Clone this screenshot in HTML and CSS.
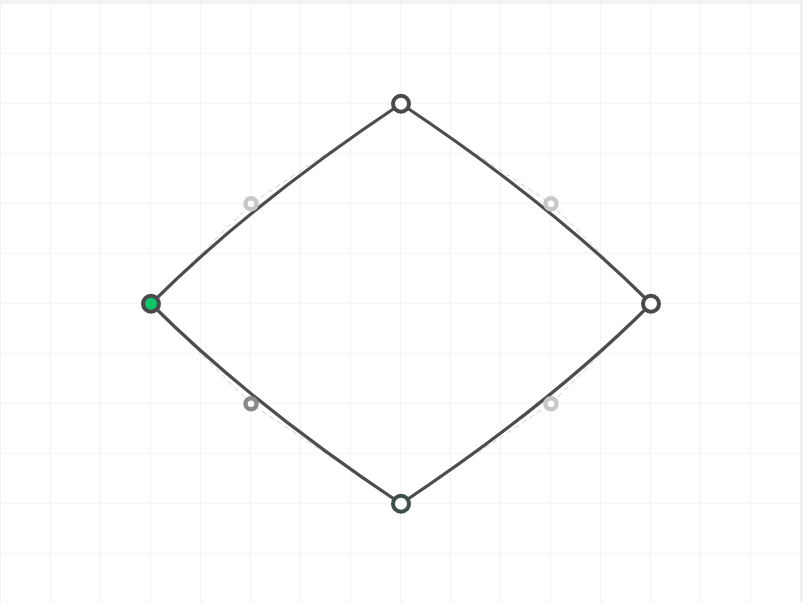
FILE: index.html
```html
<!DOCTYPE html>
<html lang="en">
<head>
  <meta charset="UTF-8">
  <title>Curve editor</title>
  <link rel="stylesheet" href="styles.css">
</head>
<body>
  <div class="board">
    <svg class="canvas" width="800" height="600" viewBox="0 -0.75 800 600">
      <defs>
        <pattern id="grid" width="50" height="50" patternUnits="userSpaceOnUse">
          <path d="M50 0 V50 M0 50 H50" class="grid-line"/>
        </pattern>
      </defs>
      <rect y="-0.75" width="800" height="601" fill="url(#grid)"/>

      <!-- handles -->
      <g class="handle-lines">
        <path d="M150 300 L250 200 L400 100"/>
        <path d="M400 100 L550 200 L650 300"/>
        <path d="M650 300 L550 400 L400 500"/>
        <path d="M400 500 L250 400 L150 300"/>
      </g>

      <!-- shape -->
      <g class="edges">
        <path d="M150 300 Q250 200 400 100"/>
        <path d="M400 100 Q550 200 650 300"/>
        <path d="M650 300 Q550 400 400 500"/>
        <path d="M400 500 Q250 400 150 300"/>
      </g>

      <g class="controls">
        <circle cx="250" cy="200" r="5.5"/>
        <circle cx="550" cy="200" r="5.5"/>
        <circle cx="550" cy="400" r="5.5"/>
        <circle cx="250" cy="400" r="5.5" class="hover"/>
      </g>

      <g class="anchors">
        <circle cx="400" cy="100" r="8"/>
        <circle cx="650" cy="300" r="8"/>
        <circle cx="400" cy="500" r="8" class="focus"/>
        <circle cx="150" cy="300" r="8" class="active"/>
      </g>
    </svg>
  </div>
</body>
</html>
```

FILE: styles.css
```css
html, body {
  margin: 0;
  height: 100%;
  overflow: hidden;
}

body {
  background: #f2f2f2;
  padding: 3px 2px 0 1px;
  box-sizing: border-box;
}

.board {
  width: 800px;
  height: 600px;
  background: white;
  border-radius: 5px 5px 0 0;
  overflow: hidden;
}

.canvas { display: block; }

.grid-line {
  fill: none;
  stroke: #f0f0f0;
  stroke-width: 1.6;
}

.handle-lines path {
  fill: none;
  stroke: #cfcfcf;
  stroke-width: 1;
  stroke-dasharray: 5 4;
}

.edges path {
  fill: none;
  stroke: #4d4d4d;
  stroke-width: 3.2;
  stroke-linecap: round;
}

.controls circle {
  fill: white;
  stroke: #c8c8c8;
  stroke-width: 4.5;
}
.controls .hover { stroke: #8a8a8a; }

.anchors circle {
  fill: white;
  stroke: #4a4a4a;
  stroke-width: 4;
}
.anchors .focus { stroke: #3f4f4a; }
.anchors .active { fill: #10c46c; }
```
